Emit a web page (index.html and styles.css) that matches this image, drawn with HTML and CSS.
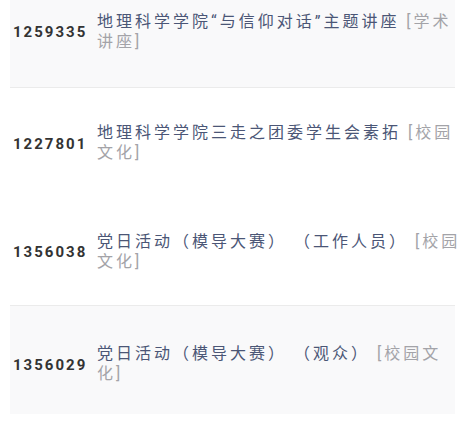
FILE: index.html
```html
<!DOCTYPE html>
<html lang="zh-CN">
<head>
    <meta charset="UTF-8">
    <meta name="viewport" content="width=device-width, initial-scale=1.0">
    <title>活动列表</title>
    <link rel="stylesheet" href="styles.css">
</head>
<body>
    <div class="list">
        <div class="item item-shade item-line row-1">
            <div class="item-id">1259335</div>
            <div class="item-title">地理科学学院“与信仰对话”主题讲座 <span class="item-tag">[学术讲座]</span></div>
        </div>
        <div class="item row-2">
            <div class="item-id">1227801</div>
            <div class="item-title">地理科学学院三走之团委学生会素拓 <span class="item-tag">[校园文化]</span></div>
        </div>
        <div class="item item-line row-3">
            <div class="item-id">1356038</div>
            <div class="item-title">党日活动（模导大赛） （工作人员） <span class="item-tag">[校园文化]</span></div>
        </div>
        <div class="item item-shade row-4">
            <div class="item-id">1356029</div>
            <div class="item-title">党日活动（模导大赛） （观众） <span class="item-tag">[校园文化]</span></div>
        </div>
    </div>
</body>
</html>
```

FILE: styles.css
```css
body {
    margin: 0;
    background: #fff;
    font-family: Roboto, "Noto Sans CJK SC", sans-serif;
}
.list {
    padding: 0 10px;
}
.item {
    display: flex;
    align-items: center;
    box-sizing: border-box;
    padding-left: 3px;
}
.item-shade {
    background: #f9f9fa;
}
.item-line {
    border-bottom: 1px solid #ebebeb;
}
.row-1 {
    height: 88px;
    padding-bottom: 24px;
}
.row-2 {
    height: 110px;
}
.row-3 {
    height: 108px;
}
.row-4 {
    height: 108px;
    padding-top: 8px;
}
.item-id {
    width: 84px;
    flex-shrink: 0;
    font-weight: bold;
    font-size: 15px;
    letter-spacing: 2px;
    color: #333;
    padding-top: 1px;
}
.item-title {
    width: 366px;
    flex-shrink: 0;
    font-size: 16px;
    letter-spacing: 3px;
    line-height: 20px;
    color: #4b5676;
}
.item-tag {
    color: #a3a3a8;
}
```
